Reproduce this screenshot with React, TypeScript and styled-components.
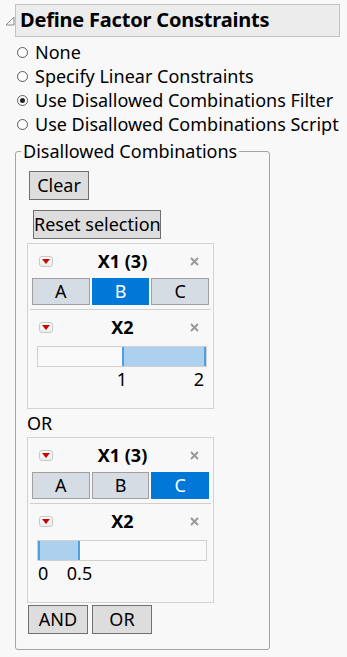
import styled, { createGlobalStyle } from "styled-components";

const GlobalStyle = createGlobalStyle`
  html, body {
    margin: 0;
    padding: 0;
    background: #f8f8f8;
  }
  body {
    font-family: "Noto Sans", "Open Sans", sans-serif;
    color: #000;
  }
`;

type Filter = {
  levels: string[];
  selected: string;
  lo: number;
  hi: number;
};

const AXIS_MAX = 2;

const filters: Filter[] = [
  { levels: ["A", "B", "C"], selected: "B", lo: 1, hi: 2 },
  { levels: ["A", "B", "C"], selected: "C", lo: 0, hi: 0.5 },
];

const options = [
  { label: "None", checked: false },
  { label: "Specify Linear Constraints", checked: false },
  { label: "Use Disallowed Combinations Filter", checked: true },
  { label: "Use Disallowed Combinations Script", checked: false },
];

const MenuIcon = () => (
  <MenuBox>
    <svg width="8" height="5" viewBox="0 0 8 5">
      <path d="M0 0 H8 L4 5 Z" fill="#d10000" />
    </svg>
  </MenuBox>
);

const CloseIcon = () => (
  <svg width="9" height="9" viewBox="0 0 9 9">
    <path d="M1 1 L8 8 M8 1 L1 8" stroke="#9a9a9a" strokeWidth="2" />
  </svg>
);

const tickStyle = (v: number) => {
  const pct = (v / AXIS_MAX) * 100;
  if (v <= 0) return { left: "1px" };
  if (v >= AXIS_MAX) return { right: "3px" };
  return { left: `${pct}%`, transform: "translateX(-50%)" };
};

const FilterCard = ({ f }: { f: Filter }) => (
  <Panel>
    <PanelHeader>
      <MenuIcon />
      <PanelTitle>X1 (3)</PanelTitle>
      <CloseIcon />
    </PanelHeader>
    <LevelRow>
      {f.levels.map((l) => (
        <LevelButton key={l} $selected={l === f.selected}>
          {l}
        </LevelButton>
      ))}
    </LevelRow>
    <Divider />
    <PanelHeader>
      <MenuIcon />
      <PanelTitle>X2</PanelTitle>
      <CloseIcon />
    </PanelHeader>
    <Track>
      <Fill
        style={{
          left: `${(f.lo / AXIS_MAX) * 100}%`,
          width: `${((f.hi - f.lo) / AXIS_MAX) * 100}%`,
        }}
      />
    </Track>
    <Ticks>
      <Tick style={tickStyle(f.lo)}>{f.lo}</Tick>
      <Tick style={tickStyle(f.hi)}>{f.hi}</Tick>
    </Ticks>
  </Panel>
);

const App = () => {
  return (
    <Page>
      <GlobalStyle />
      <HeaderRow>
        <svg width="10" height="10" viewBox="0 0 10 10">
          <path d="M9 1 L9 9 L1 9 Z" fill="none" stroke="#8a8a8a" strokeWidth="1" />
        </svg>
        <HeaderBox>Define Factor Constraints</HeaderBox>
      </HeaderRow>

      <RadioList>
        {options.map((o) => (
          <RadioRow key={o.label}>
            <RadioDot $checked={o.checked} />
            {o.label}
          </RadioRow>
        ))}
      </RadioList>

      <Group>
        <Legend>Disallowed Combinations</Legend>
        <GroupBody>
          <PushButton $ml={2} $w={60} $mb={10}>Clear</PushButton>
          <PushButton $ml={6} $w={128} $mb={4}>Reset selection</PushButton>
          <FilterCard f={filters[0]} />
          <OrLabel>OR</OrLabel>
          <FilterCard f={filters[1]} />
          <ButtonRow>
            <PushButton $ml={0} $w={60} $mb={0}>AND</PushButton>
            <PushButton $ml={0} $w={60} $mb={0}>OR</PushButton>
          </ButtonRow>
        </GroupBody>
      </Group>
    </Page>
  );
};

export default App;

const Page = styled.div`
  width: 347px;
  height: 657px;
  padding-top: 4px;
  box-sizing: border-box;
  overflow: hidden;
`;

const HeaderRow = styled.div`
  display: flex;
  align-items: center;
  padding-left: 5px;
  width: 340px;
  box-sizing: border-box;
`;

const HeaderBox = styled.div`
  flex: 1;
  height: 33px;
  box-sizing: border-box;
  border: 1px solid #c3c3c3;
  background: #ececec;
  font-size: 20px;
  font-weight: 700;
  line-height: 30px;
  padding-left: 4px;
  letter-spacing: -0.2px;
`;

const RadioList = styled.div`
  margin-top: 3px;
  padding-left: 17px;
`;

const RadioRow = styled.div`
  display: flex;
  align-items: center;
  height: 24px;
  font-size: 18px;
  gap: 7px;
`;

const RadioDot = styled.span<{ $checked: boolean }>`
  width: 11px;
  height: 11px;
  box-sizing: border-box;
  border-radius: 50%;
  border: 1px solid #5a5a5a;
  background: #fff;
  position: relative;
  flex-shrink: 0;
  &::after {
    content: "";
    display: ${(p) => (p.$checked ? "block" : "none")};
    position: absolute;
    left: 2px;
    top: 2px;
    width: 5px;
    height: 5px;
    border-radius: 50%;
    background: #222;
  }
`;

const Group = styled.fieldset`
  margin: 4px 0 0 15px;
  padding: 0;
  width: 255px;
  height: 510px;
  box-sizing: border-box;
  border: 1px solid #a4a4a4;
  border-radius: 3px;
`;

const Legend = styled.legend`
  margin-left: 5px;
  padding: 0 2px;
  font-size: 18px;
  line-height: 22px;
`;

const GroupBody = styled.div`
  display: flex;
  flex-direction: column;
  align-items: flex-start;
  padding: 9px 0 0 11px;
`;

const PushButton = styled.div<{ $ml: number; $w: number; $mb: number }>`
  margin-left: ${(p) => p.$ml}px;
  margin-bottom: ${(p) => p.$mb}px;
  width: ${(p) => p.$w}px;
  height: 29px;
  box-sizing: border-box;
  border: 1px solid #707070;
  background: #dddddd;
  font-size: 18px;
  line-height: 26px;
  text-align: center;
  white-space: nowrap;
`;

const Panel = styled.div`
  width: 187px;
  box-sizing: border-box;
  border: 1px solid #d3d3d3;
  padding: 0 1px 17px;
  display: flex;
  flex-direction: column;
`;

const PanelHeader = styled.div`
  display: flex;
  align-items: center;
  height: 34px;
  padding: 0 13px 0 10px;
`;

const MenuBox = styled.span`
  width: 14px;
  height: 11px;
  box-sizing: border-box;
  border: 1px solid #c9c9c9;
  border-radius: 3px;
  background: linear-gradient(#ffffff, #ececec);
  display: flex;
  align-items: center;
  justify-content: center;
`;

const PanelTitle = styled.span`
  flex: 1;
  text-align: center;
  font-size: 18px;
  font-weight: 700;
  padding-left: 2px;
`;

const LevelRow = styled.div`
  display: flex;
  gap: 2px;
  padding: 0 3px;
`;

const LevelButton = styled.div<{ $selected: boolean }>`
  width: 58px;
  height: 27px;
  box-sizing: border-box;
  border: 1px solid ${(p) => (p.$selected ? "#0078d7" : "#a0a0a0")};
  background: ${(p) => (p.$selected ? "#0078d7" : "#d6dce3")};
  color: ${(p) => (p.$selected ? "#fff" : "#000")};
  font-size: 18px;
  line-height: 25px;
  text-align: center;
`;

const Divider = styled.div`
  height: 1px;
  background: #d0d0d0;
  margin: 4px 1px 0;
`;

const Track = styled.div`
  position: relative;
  margin: 2px 0 0 8px;
  width: 170px;
  height: 21px;
  box-sizing: border-box;
  border: 1px solid #d0d0d0;
  background: #f9f9f9;
`;

const Fill = styled.div`
  position: absolute;
  top: 0;
  bottom: 0;
  box-sizing: border-box;
  background: #acd0ee;
  border-left: 2px solid #4d9fe2;
  border-right: 2px solid #4d9fe2;
`;

const Ticks = styled.div`
  position: relative;
  margin-left: 8px;
  width: 170px;
  height: 24px;
`;

const Tick = styled.span`
  position: absolute;
  top: 0;
  font-size: 18px;
  line-height: 24px;
`;

const OrLabel = styled.div`
  height: 28px;
  line-height: 28px;
  font-size: 18px;
`;

const ButtonRow = styled.div`
  display: flex;
  gap: 4px;
  margin: 2px 0 0 1px;
`;
